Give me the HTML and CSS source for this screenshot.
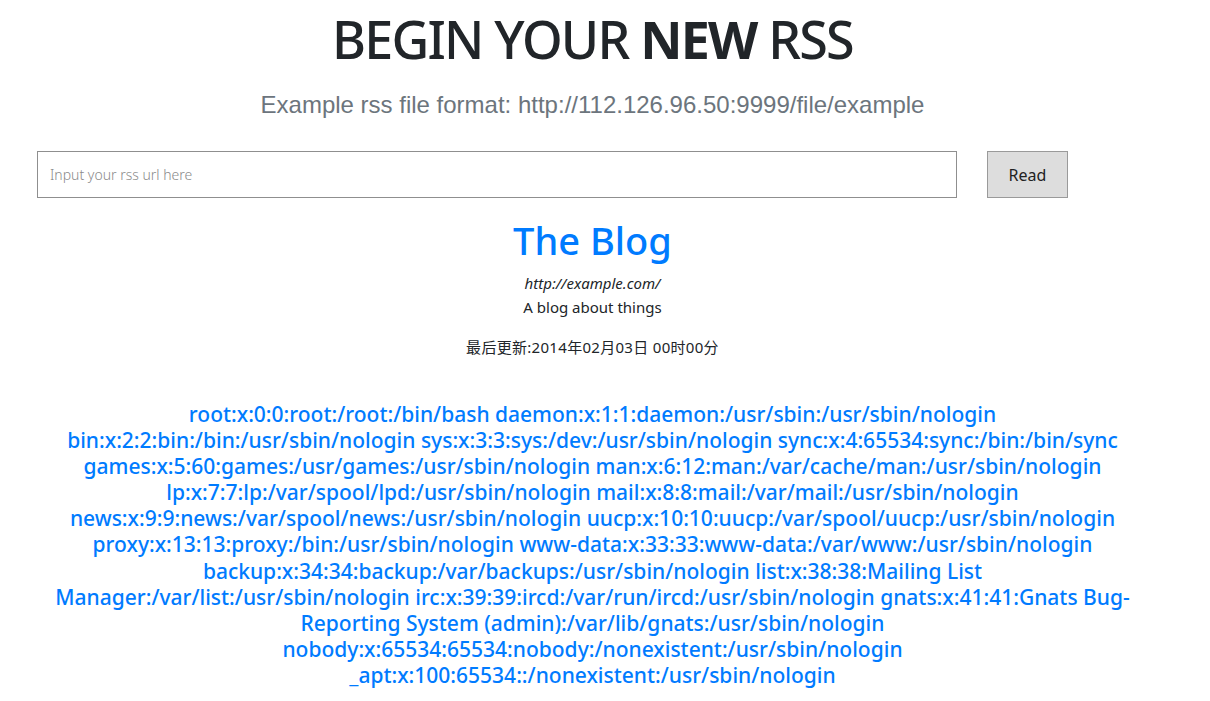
FILE: index.html
```html
<!DOCTYPE html>
<html lang="zh">
<head>
<meta charset="utf-8">
<title>RSS Reader</title>
<link rel="stylesheet" href="styles.css">
</head>
<body>
<main class="page">
  <header class="hero">
    <h1 class="title">BEGIN YOUR <b>NEW</b> RSS</h1>
    <p class="lead">Example rss file format: http://112.126.96.50:9999/file/example</p>
  </header>
  <form class="reader">
    <input class="url" type="text" placeholder="Input your rss url here">
    <button class="read" type="button">Read</button>
  </form>
  <section class="feed">
    <h2 class="feed-title"><a href="#">The Blog</a></h2>
    <p class="feed-link"><i>http://example.com/</i></p>
    <p class="feed-desc">A blog about things</p>
    <p class="feed-date">最后更新:2014年02月03日 00时00分</p>
    <h4 class="item"><a href="#">root:x:0:0:root:/root:/bin/bash daemon:x:1:1:daemon:/usr/sbin:/usr/sbin/nologin<br>bin:x:2:2:bin:/bin:/usr/sbin/nologin sys:x:3:3:sys:/dev:/usr/sbin/nologin sync:x:4:65534:sync:/bin:/bin/sync<br>games:x:5:60:games:/usr/games:/usr/sbin/nologin man:x:6:12:man:/var/cache/man:/usr/sbin/nologin<br>lp:x:7:7:lp:/var/spool/lpd:/usr/sbin/nologin mail:x:8:8:mail:/var/mail:/usr/sbin/nologin<br>news:x:9:9:news:/var/spool/news:/usr/sbin/nologin uucp:x:10:10:uucp:/var/spool/uucp:/usr/sbin/nologin<br>proxy:x:13:13:proxy:/bin:/usr/sbin/nologin www-data:x:33:33:www-data:/var/www:/usr/sbin/nologin<br>backup:x:34:34:backup:/var/backups:/usr/sbin/nologin list:x:38:38:Mailing List<br>Manager:/var/list:/usr/sbin/nologin irc:x:39:39:ircd:/var/run/ircd:/usr/sbin/nologin gnats:x:41:41:Gnats Bug-<br>Reporting System (admin):/var/lib/gnats:/usr/sbin/nologin<br>nobody:x:65534:65534:nobody:/nonexistent:/usr/sbin/nologin<br>_apt:x:100:65534::/nonexistent:/usr/sbin/nologin</a></h4>
  </section>
</main>
</body>
</html>
```

FILE: styles.css
```css
* { box-sizing: border-box; }
html, body { margin: 0; padding: 0; background: #fff; }
body {
  font-family: "Noto Sans", "Open Sans", "Noto Sans CJK SC", sans-serif;
  color: #212529;
  font-size: 15px;
}
a { color: #007bff; text-decoration: none; }
.page {
  width: 1185px;
  display: flex;
  flex-direction: column;
  align-items: center;
}
.hero { text-align: center; }
.title {
  margin: 7px 0 0;
  font-size: 52px;
  line-height: 64px;
  font-weight: 500;
  letter-spacing: -1.8px;
}
.title b { font-weight: 700; }
.lead {
  margin: 20px 0 0;
  font-family: "Liberation Sans", Arial, sans-serif;
  font-size: 24px;
  line-height: 28px;
  color: #6c757d;
}
.reader {
  align-self: stretch;
  display: flex;
  gap: 30px;
  padding: 0 0 0 37px;
  margin-top: 32px;
}
.url {
  width: 920px;
  height: 47px;
  border: 1px solid #8f8f8f;
  padding: 0 12px;
  font-family: inherit;
  font-size: 14px;
  outline: none;
}
.url::placeholder { color: #8a8a8a; font-weight: 300; }
.read {
  width: 81px;
  height: 47px;
  background: #dddddd;
  border: 1px solid #9a9a9a;
  font-family: inherit;
  font-size: 16px;
  color: #222;
  padding: 0;
}
.feed {
  text-align: center;
  display: flex;
  flex-direction: column;
  align-items: center;
}
.feed-title {
  margin: 18px 0 0;
  font-size: 38px;
  line-height: 48px;
  font-weight: 500;
}
.feed-link {
  margin: 7px 0 0;
  font-size: 15px;
  line-height: 24px;
}
.feed-desc {
  margin: 0;
  font-size: 15px;
  line-height: 24px;
}
.feed-date {
  margin: 16px 0 0;
  font-size: 15px;
  line-height: 24px;
  letter-spacing: 0.3px;
}
.item {
  margin: 42px 0 0;
  font-size: 21px;
  line-height: 26.1px;
  font-weight: 500;
  white-space: nowrap;
}
```
